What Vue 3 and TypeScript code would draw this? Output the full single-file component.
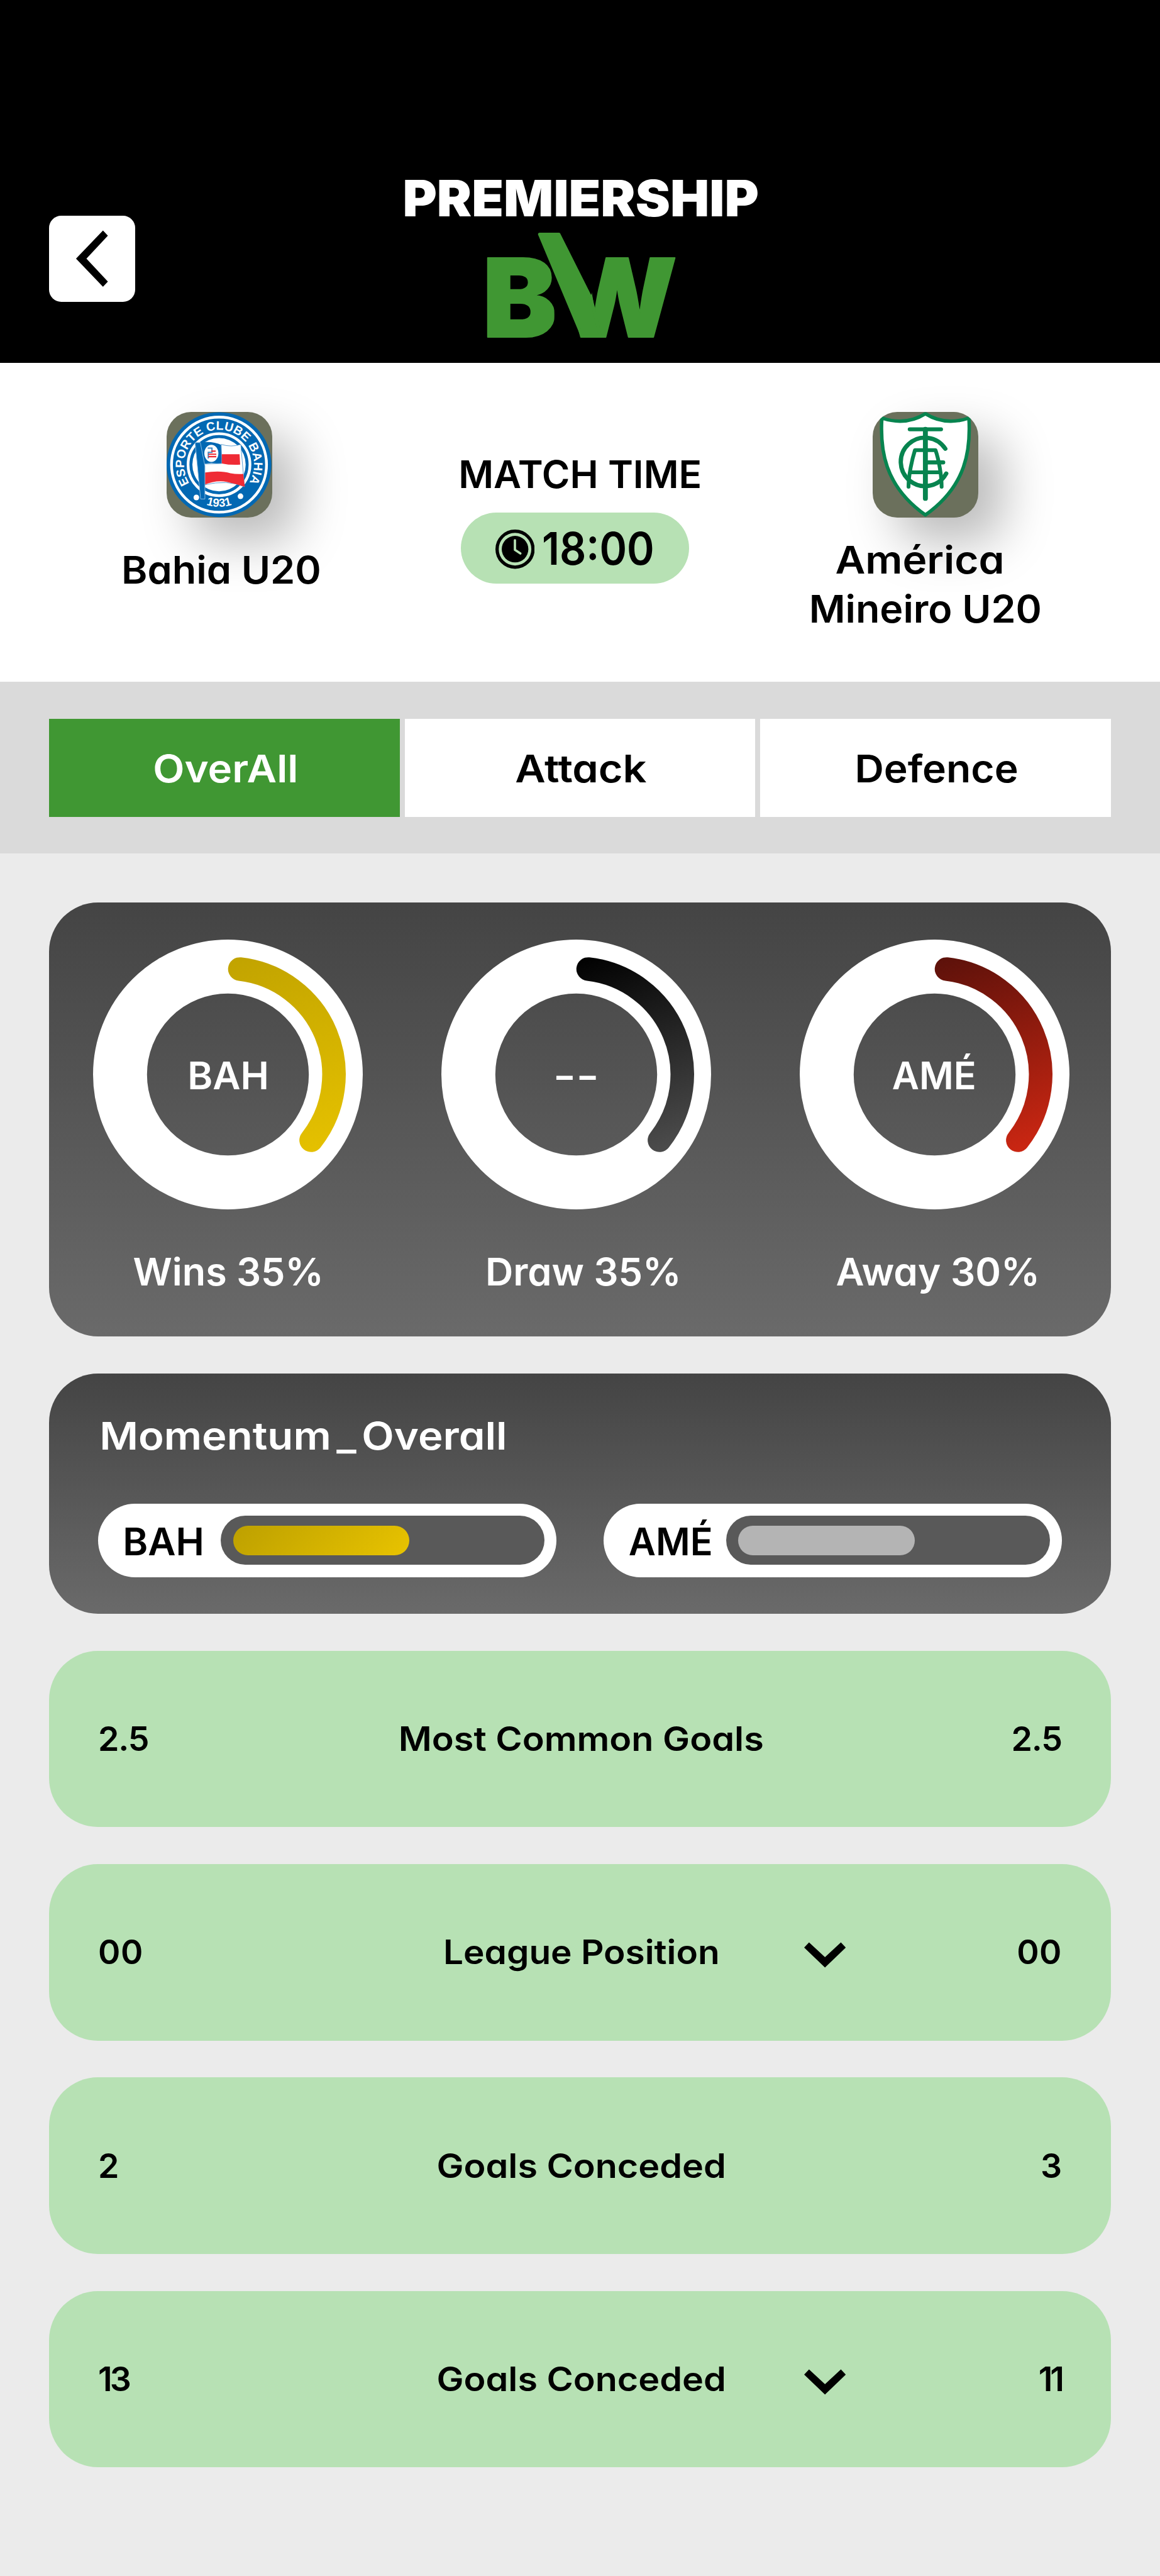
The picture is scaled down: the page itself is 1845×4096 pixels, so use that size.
<script setup lang="ts">
interface Ring {
  id: string
  code: string
  codeClass: string
  label: string
  labelClass: string
  from: string
  to: string
}

interface Momentum {
  code: string
  kind: string
  codeClass: string
  share: number
}

interface StatRow {
  home: string
  label: string
  labelClass: string
  away: string
  numClass: string
  expandable: boolean
}

const tabs = [
  { name: 'OverAll', cls: 't-overall', active: true },
  { name: 'Attack', cls: 't-attack', active: false },
  { name: 'Defence', cls: 't-defence', active: false },
]

const rings: Ring[] = [
  { id: 'home', code: 'BAH', codeClass: 't-bah', label: 'Wins 35%', labelClass: 't-wins', from: '#c1a300', to: '#e4c000' },
  { id: 'draw', code: '--', codeClass: 't-dash', label: 'Draw 35%', labelClass: 't-draw', from: '#000000', to: '#4b4b4b' },
  { id: 'away', code: 'AMÉ', codeClass: 't-ame', label: 'Away 30%', labelClass: 't-away', from: '#5b110a', to: '#c92612' },
]

const momentum: Momentum[] = [
  { code: 'BAH', kind: 'gold', codeClass: 't-bah', share: 59.02 },
  { code: 'AMÉ', kind: 'grey', codeClass: 't-ame', share: 59.02 },
]

const rows: StatRow[] = [
  { home: '2.5', label: 'Most Common Goals', labelClass: 't-common', away: '2.5', numClass: 't-dec', expandable: false },
  { home: '00', label: 'League Position', labelClass: 't-league', away: '00', numClass: 't-zero', expandable: true },
  { home: '2', label: 'Goals Conceded', labelClass: 't-conceded', away: '3', numClass: '', expandable: false },
  { home: '13', label: 'Goals Conceded', labelClass: 't-conceded', away: '11', numClass: 't-ones', expandable: true },
]
</script>

<template>
  <main class="screen">
    <header class="top">
      <button class="back" aria-label="Back">
        <svg viewBox="0 0 140 140"><path d="M88 24 L96 32.5 L61 70 L96 107.5 L88 116 L44 70 Z" fill="#000" /></svg>
      </button>
      <svg class="logo" viewBox="648 260 596 332">
        <defs>
          <clipPath id="bw-cut">
            <path d="M780 400 H904 V560 H780 Z M963 485 L984 415 H1112 V560 H930 Z" />
          </clipPath>
        </defs>
        <text class="logo-top" x="656.6" y="352" textLength="581" lengthAdjust="spacingAndGlyphs">PREMIERSHIP</text>
        <text class="logo-bw" x="787" y="549.2" textLength="318" lengthAdjust="spacingAndGlyphs" clip-path="url(#bw-cut)">BW</text>
        <path d="M880 381.500 H911.500 L964 486 L979 547.500 H949.500 Z" fill="#409733" stroke="#409733" stroke-width="5" stroke-linejoin="round" />
      </svg>
    </header>

    <section class="match">
      <div class="team">
        <div class="badge">
          <svg viewBox="0 0 172 172">
            <circle cx="85.500" cy="86" r="85.500" fill="#0268b3" />
            <circle cx="85.500" cy="86" r="77.500" fill="none" stroke="#fff" stroke-width="4.500" />
            <circle cx="85.500" cy="86" r="50.500" fill="none" stroke="#fff" stroke-width="4.500" />
            <circle cx="85.500" cy="86" r="43.500" fill="#fff" />
            <path id="crest-top" d="M37.900 117.500 A57 57 0 1 1 133.100 117.500" fill="none" />
            <path id="crest-bottom" d="M57 148.500 A69 69 0 0 0 114 148.500" fill="none" />
            <text class="crest-text"><textPath href="#crest-top" startOffset="1" textLength="241" lengthAdjust="spacing">ESPORTE CLUBE BAHIA</textPath></text>
            <text class="crest-text crest-year"><textPath href="#crest-bottom" startOffset="50%" text-anchor="middle">1931</textPath></text>
            <circle cx="48.500" cy="139.500" r="4.600" fill="#fff" />
            <circle cx="120.500" cy="137.500" r="4.600" fill="#fff" />
            <path d="M54 50 Q74 47 90 54 V86 Q74 81 61 85 Z" fill="#0268b3" />
            <path d="M89 53 Q106 58 121 53 L127 122 Q100 110 61 119 L61 85 L90 84 Z" fill="#fff" stroke="#5a9bcf" stroke-width="1" />
            <path d="M90 69 H119 L120 86 Q104 87 90 84 Z" fill="#ef2b35" />
            <path d="M61 99 Q88 95 104 100 Q115 102 125 101 L127.500 122 Q112 117 98 114 Q80 111 61 119 Z" fill="#ef2b35" />
            <path d="M46.500 50 H55 L62.500 88 V142 H55.500 Z" fill="#0268b3" stroke="#8dbbe0" stroke-width="1" />
            <ellipse cx="73" cy="67.500" rx="11.500" ry="14" fill="#fff" />
            <path d="M67 59 H74 V66 H68 V76" fill="none" stroke="#3e86c2" stroke-width="2" />
            <path d="M73 64 H80 M68 69 H81 M68 73 H81" stroke="#ef2b35" stroke-width="2.200" />
          </svg>
        </div>
        <p class="name name-home"><span class="txt t-bahia">Bahia U20</span></p>
      </div>

      <div class="time">
        <p class="txt t-match">MATCH TIME</p>
        <div class="pill">
          <svg class="clock" viewBox="0 0 64 64">
            <circle cx="32" cy="32" r="29.300" fill="none" stroke="#000" stroke-width="5.400" />
            <circle cx="32" cy="32" r="21.700" fill="#000" />
            <path d="M31.800 17.500 V33 L40.700 39" fill="none" stroke="#b7e1b4" stroke-width="3.800" stroke-linecap="round" stroke-linejoin="round" />
          </svg>
          <span class="txt t-clock">18:00</span>
        </div>
      </div>

      <div class="team">
        <div class="badge">
          <svg viewBox="0 0 172 172">
            <path d="M86 3 Q54 23 15 10 C12 60 18 120 86 168 C154 120 160 60 157 10 Q118 23 86 3 Z" fill="#fff" stroke="#07844f" stroke-width="5.600" stroke-linejoin="round" />
            <g fill="none" stroke="#07844f" stroke-linecap="round" stroke-linejoin="round">
              <path d="M60.500 28.300 H111.500" stroke-width="6.500" />
              <path d="M86 28.300 V141" stroke-width="8" />
              <path d="M118.500 60 A39.500 39.500 0 1 0 120 100.500" stroke-width="7" />
              <path d="M58.500 122 C58.500 104 64 78 69 62.300 H102.500 C108 78 112.500 104 112.500 122" stroke-width="6.200" />
              <path d="M62 98.500 H110" stroke-width="6.200" />
              <path d="M86 82.300 H115" stroke-width="6.800" />
            </g>
          </svg>
        </div>
        <p class="name name-away">
          <span class="txt t-america">América</span>
          <span class="txt t-mineiro">Mineiro U20</span>
        </p>
      </div>
    </section>

    <nav class="tabs">
      <button v-for="t in tabs" :key="t.name" class="tab" :class="{ active: t.active }">
        <span class="txt" :class="t.cls">{{ t.name }}</span>
      </button>
    </nav>

    <div class="cards">
      <section class="card rings">
        <div class="ring-row">
          <div v-for="r in rings" :key="r.id" class="ring">
            <svg viewBox="0 0 440 440">
              <defs>
                <linearGradient :id="'arc-' + r.id" gradientUnits="userSpaceOnUse" x1="220" y1="28" x2="330" y2="350">
                  <stop offset="0" :stop-color="r.from" />
                  <stop offset="1" :stop-color="r.to" />
                </linearGradient>
              </defs>
              <circle cx="220" cy="220" r="176" fill="none" stroke="#fff" stroke-width="88" />
              <path d="M239.500 48.100 A173 173 0 0 1 355.800 327.200" fill="none" :stroke="'url(#arc-' + r.id + ')'" stroke-width="38.500" stroke-linecap="round" />
            </svg>
            <span class="txt code" :class="r.codeClass">{{ r.code }}</span>
          </div>
        </div>
        <div class="ring-labels">
          <p v-for="r in rings" :key="r.id"><span class="txt" :class="r.labelClass">{{ r.label }}</span></p>
        </div>
      </section>

      <section class="card momentum">
        <h2 class="txt t-momentum">Momentum<span class="underscore">_</span>Overall</h2>
        <div class="meters">
          <div v-for="m in momentum" :key="m.code" class="meter">
            <span class="meter-code"><span class="txt" :class="m.codeClass">{{ m.code }}</span></span>
            <div class="track">
              <div class="fill" :class="m.kind" :style="{ width: m.share + '%' }"></div>
            </div>
          </div>
        </div>
      </section>

      <section v-for="(row, i) in rows" :key="i" class="stat">
        <span class="num" :class="row.numClass">{{ row.home }}</span>
        <div class="mid">
          <span class="txt small" :class="row.labelClass">{{ row.label }}</span>
          <svg v-if="row.expandable" class="chev" viewBox="0 0 68 42">
            <path d="M8 0.500 L34 24.500 L60 0.500 L68 9 L34 41.500 L0 9 Z" fill="#000" />
          </svg>
        </div>
        <span class="num right" :class="row.numClass">{{ row.away }}</span>
      </section>
    </div>
  </main>
</template>

<style>
/* 1rem equals 100 layout units */
html {
  font-size: 97.5px;
}
body {
  margin: 0;
  background: #ebebeb;
}
</style>

<style scoped>
.screen {
  width: 100%;
  height: 4096px;
  overflow: hidden;
  background: #ebebeb;
  font-family: Inter, 'Noto Sans', sans-serif;
  font-size: 0.16rem;
  line-height: 1;
  font-feature-settings: 'cv11';
  font-weight: 600;
  color: #000;
}
p,
h2 {
  margin: 0;
  font-weight: 600;
}
button {
  border: 0;
  padding: 0;
  font: inherit;
  font-feature-settings: inherit;
  color: inherit;
}
svg {
  display: block;
}

.txt {
  --sx: 1;
  display: inline-block;
  vertical-align: top;
  font-size: 0.625rem;
  font-weight: 620;
  line-height: 0.8rem;
  white-space: pre;
  transform: scaleX(var(--sx));
}
.txt.small {
  font-size: 0.547rem;
}
.t-bahia { --sx: 1.033; }
.t-america { --sx: 1.079; }
.t-mineiro { --sx: 1.029; }
.t-match { --sx: 0.994; }
.txt.t-clock { --sx: 0.93; font-size: 0.73rem; transform-origin: left center; }
.t-overall { --sx: 1.073; }
.t-attack { --sx: 1.093; }
.t-defence { --sx: 1.053; }
.t-bah { --sx: 0.998; }
.t-ame { --sx: 0.974; }
.t-dash { --sx: 1.3; }
.t-wins { --sx: 1.003; }
.t-draw { --sx: 1.007; }
.t-away { --sx: 1.015; }
.t-momentum { --sx: 1.1; transform-origin: left center; }
.t-common { --sx: 1.079; }
.t-league { --sx: 1.063; }
.t-conceded { --sx: 1.077; }
.underscore {
  margin: 0 0.08rem;
}

/* header */
.top {
  box-sizing: border-box;
  height: 5.92rem;
  padding: 2.6rem 0.8rem 0;
  display: grid;
  grid-template-columns: 1.4rem 1fr 1.4rem;
  background: #000;
}
.back {
  width: 1.4rem;
  height: 1.4rem;
  margin-top: 0.92rem;
  border-radius: 0.2rem;
  background: #fff;
}
.back svg {
  width: 100%;
  height: 100%;
}
.logo {
  width: 5.96rem;
  height: 3.32rem;
  justify-self: center;
}
.logo-top {
  font-size: 81.5px;
  font-weight: 900;
  fill: #fff;
}
.logo-bw {
  font-size: 178px;
  font-weight: 900;
  fill: #409733;
  stroke: #409733;
  stroke-width: 2px;
  stroke-linejoin: round;
}

/* match */
.match {
  box-sizing: border-box;
  height: 5.2rem;
  padding: 0.8rem 1.28rem 0 0.8rem;
  display: grid;
  grid-template-columns: 5.56rem 6.2rem 5.08rem;
  background: #fff;
}
.team {
  display: flex;
  flex-direction: column;
  align-items: center;
}
.badge {
  width: 1.72rem;
  height: 1.72rem;
  border-radius: 0.4rem;
  background: #6b705c;
  box-shadow: 0.4rem 0.4rem 0.8rem rgba(0, 0, 0, 0.27);
}
.badge svg {
  width: 100%;
  height: 100%;
  border-radius: 0.4rem;
}
.crest-text {
  font-family: 'Liberation Sans', Arial, sans-serif;
  font-size: 20px;
  font-weight: 700;
  fill: #fff;
}
.crest-year {
  font-size: 19px;
}
.name {
  display: flex;
  flex-direction: column;
  align-items: center;
}
.name-home {
  margin-top: 0.455rem;
  padding-left: 0.05rem;
}
.name-away {
  margin-top: 0.293rem;
}
.name-away .t-america {
  padding-right: 0.18rem;
}
.time {
  display: flex;
  flex-direction: column;
  align-items: center;
  padding-top: 0.617rem;
}
.pill {
  box-sizing: border-box;
  width: 3.72rem;
  height: 1.16rem;
  margin: 0.223rem 0.16rem 0 0;
  padding-left: 0.56rem;
  display: flex;
  align-items: center;
  border-radius: 0.58rem;
  background: #b7e1b4;
}
.clock {
  width: 0.64rem;
  height: 0.64rem;
  margin-top: 0.04rem;
}
.t-clock {
  margin-left: 0.118rem;
}

/* tabs */
.tabs {
  box-sizing: border-box;
  height: 2.8rem;
  padding: 0.6rem 0.8rem;
  display: grid;
  grid-template-columns: repeat(3, 1fr);
  gap: 0.08rem;
  background: #dadada;
}
.tab {
  background: #fff;
}
.tab .txt {
  padding-top: 0.03rem;
  padding-left: 0.03rem;
}
.tab.active {
  background: #409733;
  color: #fff;
}

/* cards */
.cards {
  padding: 0.8rem 0.8rem 0;
  display: flex;
  flex-direction: column;
  gap: 0.6rem;
}
.card {
  box-sizing: border-box;
  border-radius: 0.8rem;
  background: linear-gradient(#444, #6a6a6a);
  color: #fff;
}
.rings {
  height: 7.08rem;
  padding-top: 0.6rem;
}
.ring-row {
  display: flex;
  padding: 0 0.68rem 0 0.72rem;
  justify-content: space-between;
}
.ring {
  width: 4.4rem;
  height: 4.4rem;
  display: grid;
  place-items: center;
}
.ring:nth-child(2) {
  margin-right: 0.16rem;
}
.ring > * {
  grid-area: 1 / 1;
}
.ring svg {
  width: 100%;
  height: 100%;
}
.code {
  padding-top: 0.03rem;
}
.ring-labels {
  display: grid;
  grid-template-columns: repeat(3, 5.79rem);
  padding-left: 0.03rem;
  margin-top: 0.62rem;
  text-align: center;
}

.momentum {
  height: 3.92rem;
  padding: 0.617rem 0.8rem 0;
}
.momentum h2 {
  padding-left: 0.02rem;
}
.meters {
  display: flex;
  justify-content: space-between;
  margin-top: 0.703rem;
}
.meter {
  box-sizing: border-box;
  width: 7.48rem;
  height: 1.2rem;
  padding: 0.2rem;
  display: flex;
  border-radius: 0.6rem;
  background: #fff;
  color: #000;
}
.meter-code {
  box-sizing: border-box;
  flex: none;
  width: 1.8rem;
  padding-left: 0.195rem;
  padding-top: 0.015rem;
}
.track {
  box-sizing: border-box;
  flex: none;
  width: 5.28rem;
  height: 0.8rem;
  padding: 0.16rem 0.2rem;
  border-radius: 0.4rem;
  background: #595959;
}
.fill {
  height: 0.48rem;
  border-radius: 0.24rem;
}
.gold {
  background: linear-gradient(135deg, #bda000, #e8c300);
}
.grey {
  background: #b4b4b4;
}

.stat {
  box-sizing: border-box;
  height: 2.88rem;
  padding: 0 0.8rem;
  display: grid;
  grid-template-columns: 3rem 1fr 3rem;
  align-items: center;
  border-radius: 0.8rem;
  background: #b7e1b4;
}
.num {
  font-size: 0.55rem;
  line-height: 0.8rem;
}
.num.right {
  text-align: right;
}
.t-dec { letter-spacing: -0.02em; }
.t-zero { letter-spacing: 0.01em; }
.t-ones { letter-spacing: -0.075em; }
.mid {
  position: relative;
  text-align: center;
  padding-left: 0.04rem;
}
.chev {
  position: absolute;
  left: 8.515rem;
  top: 0.236rem;
  width: 0.68rem;
  height: 0.42rem;
}
</style>
